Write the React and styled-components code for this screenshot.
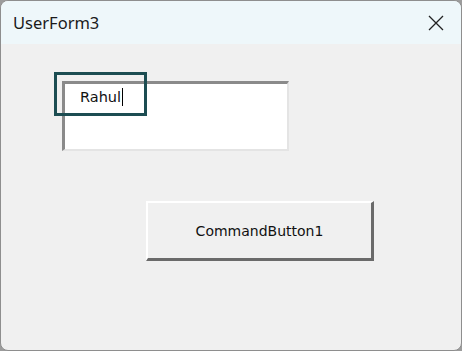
import styled, { createGlobalStyle } from 'styled-components';

const GlobalStyle = createGlobalStyle`
  html, body {
    margin: 0;
    padding: 0;
    background: #9c9c9c;
  }
  body {
    width: 462px;
    height: 351px;
    overflow: hidden;
  }
`;

const Window = styled.div`
  box-sizing: border-box;
  width: 462px;
  height: 351px;
  border: 1px solid #8e8e8e;
  border-radius: 8px;
  overflow: hidden;
  background: #f0f0f0;
  display: flex;
  flex-direction: column;
`;

const TitleBar = styled.div`
  height: 43px;
  flex-shrink: 0;
  background: #eef7fa;
  display: flex;
  align-items: center;
  justify-content: space-between;
  padding: 0 16px 0 12px;
`;

const Title = styled.span`
  font-family: "Noto Sans", "Open Sans", sans-serif;
  font-size: 16.5px;
  color: #1a1a1a;
  margin-top: -1px;
`;

const CloseButton = styled.div`
  width: 18px;
  height: 18px;
  display: flex;
  align-items: center;
  justify-content: center;
`;

const FormBody = styled.div`
  flex: 1;
  padding: 37px 0 0 61px;
  display: flex;
  flex-direction: column;
`;

const TextBoxWrap = styled.div`
  position: relative;
  width: 227px;
  height: 70px;
`;

const TextBox = styled.div`
  box-sizing: border-box;
  width: 100%;
  height: 100%;
  background: #ffffff;
  border-top: 3px solid #8a8a8a;
  border-left: 3px solid #8a8a8a;
  border-right: 2px solid #e4e4e4;
  border-bottom: 2px solid #e4e4e4;
  padding: 5px 0 0 15px;
  font-family: Tahoma, "DejaVu Sans", sans-serif;
  font-size: 14.5px;
  color: #111;
  display: flex;
  align-items: flex-start;
`;

const Caret = styled.span`
  display: inline-block;
  width: 1px;
  height: 18px;
  background: #000;
  margin-left: 1px;
  margin-top: -1px;
`;

const Highlight = styled.div`
  position: absolute;
  left: -8px;
  top: -9px;
  width: 93px;
  height: 44px;
  box-sizing: border-box;
  border: 3px solid #1c4d52;
`;

const CommandButton = styled.button`
  box-sizing: border-box;
  margin: 50px 0 0 84px;
  width: 228px;
  height: 60px;
  background: #f0f0f0;
  border-top: 2px solid #ffffff;
  border-left: 2px solid #ffffff;
  border-right: 3px solid #6a6a6a;
  border-bottom: 3px solid #6a6a6a;
  border-radius: 0;
  font-family: Tahoma, "DejaVu Sans", sans-serif;
  font-size: 14px;
  color: #111;
  padding: 0;
`;

export default function App() {
  return (
    <>
      <GlobalStyle />
      <Window>
        <TitleBar>
          <Title>UserForm3</Title>
          <CloseButton>
            <svg width="16" height="16" viewBox="0 0 16 16">
              <path d="M1 1 L15 15 M15 1 L1 15" stroke="#222" strokeWidth="1.3" fill="none" />
            </svg>
          </CloseButton>
        </TitleBar>
        <FormBody>
          <TextBoxWrap>
            <TextBox>
              Rahul<Caret />
            </TextBox>
            <Highlight />
          </TextBoxWrap>
          <CommandButton>CommandButton1</CommandButton>
        </FormBody>
      </Window>
    </>
  );
}
